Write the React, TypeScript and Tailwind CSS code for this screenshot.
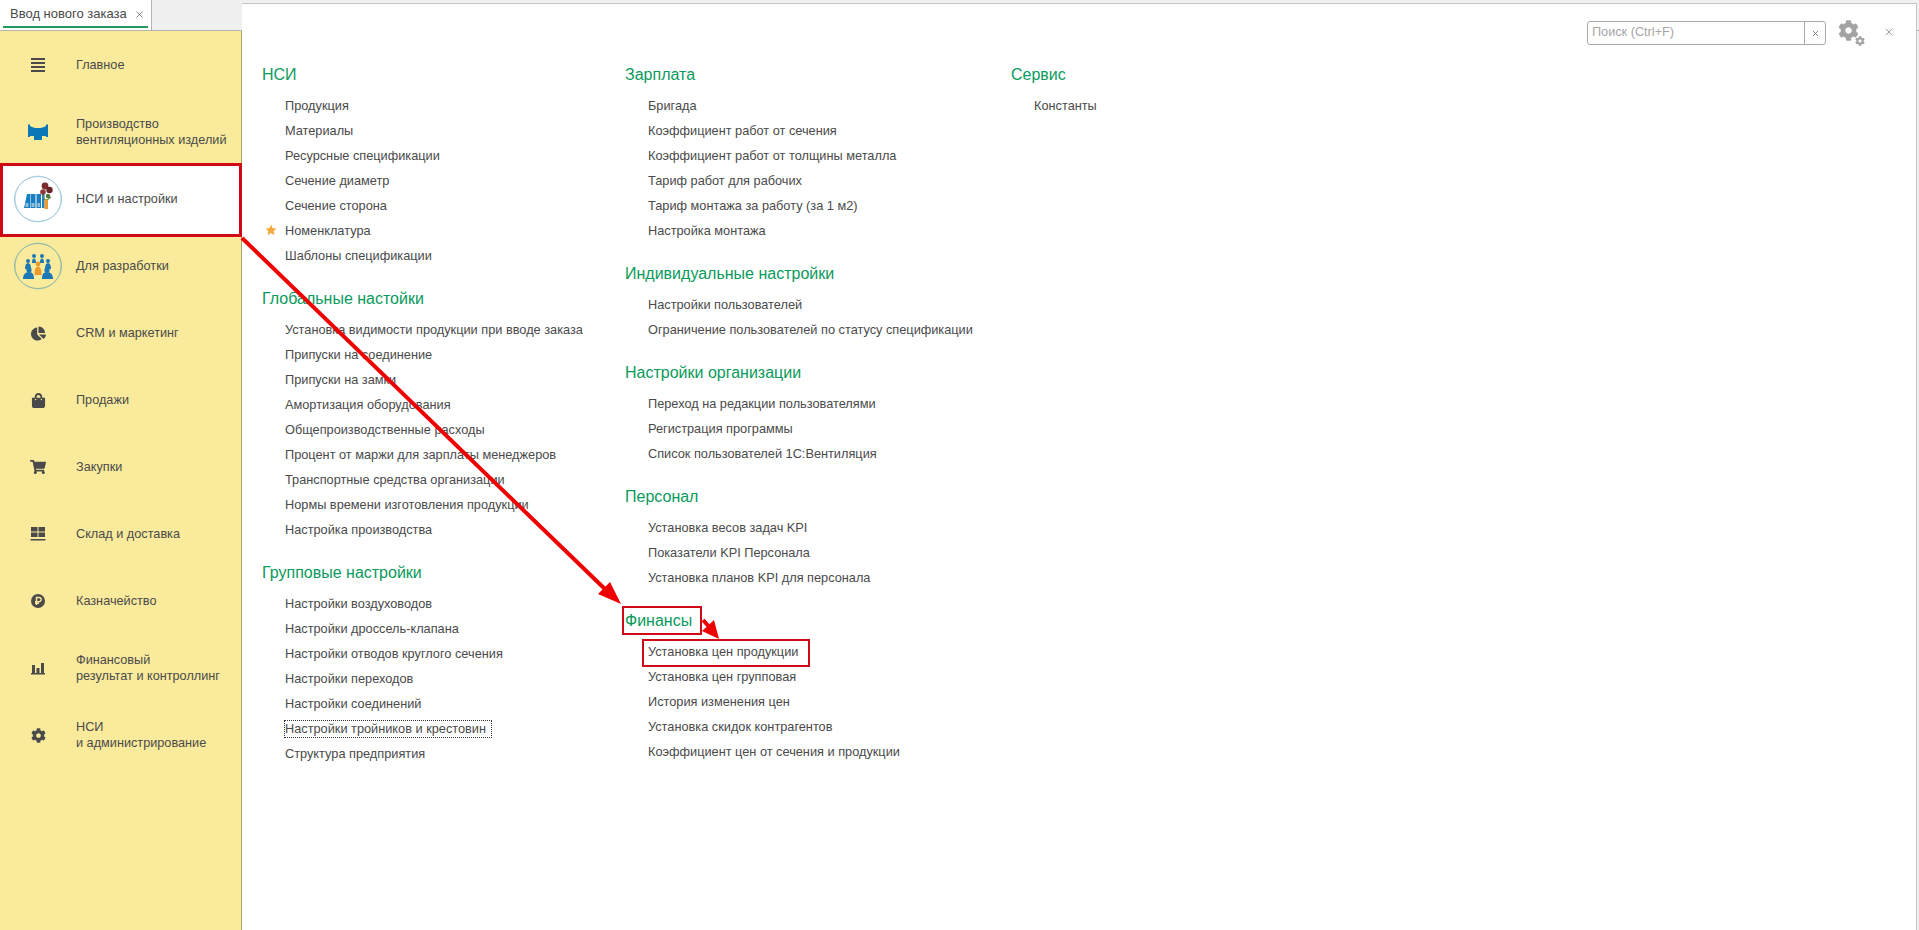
import { FaChartPie, FaCog, FaShoppingBag, FaShoppingCart } from 'react-icons/fa';
import { X } from 'lucide-react';
import type { ReactNode } from 'react';

const font = { fontFamily: '"Liberation Sans", Arial, sans-serif' };

function MenuIcon() {
  return (
    <svg width="16" height="16" viewBox="0 0 16 16" fill="#4a4a4a">
      <rect x="1" y="1" width="14" height="2" />
      <rect x="1" y="5" width="14" height="2" />
      <rect x="1" y="9" width="14" height="2" />
      <rect x="1" y="13" width="14" height="2" />
    </svg>
  );
}

function DuctIcon() {
  return (
    <svg width="20" height="16" viewBox="0 0 20 16" fill="#0b77b5">
      <path d="M0 0.500h2v1.500c3 1.500 4 2 8 2s5-.5 8-2V0.500h2v12.500h-2v-1H14V16H6v-4H2v1H0z" />
    </svg>
  );
}

function NsiBadge() {
  return (
    <svg width="48" height="48" viewBox="0 0 48 48" fill="none">
      <ellipse cx="24" cy="24" rx="23.500" ry="22.500" stroke="#7db4d2" strokeWidth="0.8" />
      <ellipse cx="24" cy="24" rx="22.800" ry="23" stroke="#a9cfe2" strokeWidth="0.6" />
      <path d="M10 33l3-14h3v14z" fill="#1a7fc1" />
      <rect x="16.500" y="19" width="5" height="14" fill="#1a7fc1" />
      <rect x="22.500" y="19" width="4.500" height="14" fill="#1a7fc1" />
      <rect x="28" y="19" width="2.500" height="14" fill="#1a7fc1" />
      <path d="M17.500 29h3M23.500 29h2.500M11.500 29h3M17.500 31h3M23.500 31h2.500M11.500 31h3" stroke="#ffffff" strokeWidth="1" />
      <rect x="30.500" y="24" width="3.500" height="10" fill="#ef9a2f" />
      <path d="M31 25l-3-5M33 25l4-3" stroke="#5f8f4b" strokeWidth="1.200" />
      <circle cx="31" cy="11" r="3.400" fill="#7c2b2f" />
      <circle cx="35.500" cy="15" r="3.200" fill="#6b2528" />
      <circle cx="29" cy="17" r="2.800" fill="#8e3a3a" />
      <circle cx="34" cy="21" r="2.200" fill="#56733f" />
    </svg>
  );
}

function TeamBadge() {
  return (
    <svg width="48" height="48" viewBox="0 0 48 48" fill="none">
      <ellipse cx="24" cy="24" rx="23.500" ry="22.500" stroke="#6fa6a6" strokeWidth="0.8" />
      <ellipse cx="24" cy="24" rx="22.800" ry="23" stroke="#96bcae" strokeWidth="0.6" />
      <g fill="#1b78b6">
        <circle cx="14" cy="19" r="2" />
        <circle cx="34" cy="19" r="2" />
        <circle cx="20" cy="14" r="2" />
        <circle cx="28" cy="14" r="2" />
        <path d="M11 27c0-4 1-6 3-6s3 2 3 6zM31 27c0-4 1-6 3-6s3 2 3 6zM18 21c0-3 .5-4.500 2-4.500s2 1.500 2 4.500zM26 21c0-3 .5-4.500 2-4.500s2 1.500 2 4.500z" />
        <circle cx="15" cy="28" r="2.600" />
        <circle cx="33" cy="28" r="2.600" />
        <path d="M9 37c0-4 2-7 6-7s5 3 5 7zM28 37c0-4 1-7 5-7s6 3 6 7z" />
      </g>
      <circle cx="24" cy="22" r="2.400" fill="#ef9a2f" />
      <path d="M20.500 33c0-5 1-8.500 3.500-8.500s3.500 3.500 3.500 8.500z" fill="#ef9a2f" />
    </svg>
  );
}

function RubleIcon() {
  return (
    <svg width="16" height="16" viewBox="0 0 16 16">
      <circle cx="8" cy="8" r="7" fill="#4a4a4a" />
      <path d="M6.500 12V4.500h2.600a2 2 0 0 1 0 4.200H5M5 10.400h4" fill="none" stroke="#faeb9c" strokeWidth="1.400" />
    </svg>
  );
}

function WarehouseIcon() {
  return (
    <svg width="16" height="16" viewBox="0 0 16 16" fill="#4a4a4a">
      <rect x="1" y="1" width="6.500" height="4.500" />
      <rect x="8.500" y="1" width="6.500" height="4.500" />
      <rect x="1" y="6.500" width="6.500" height="4.500" />
      <rect x="8.500" y="6.500" width="6.500" height="4.500" />
      <rect x="0.500" y="13" width="15" height="1.500" />
    </svg>
  );
}

function BarsIcon() {
  return (
    <svg width="16" height="16" viewBox="0 0 16 16" fill="#4a4a4a">
      <rect x="2" y="5" width="3" height="8" />
      <rect x="6.500" y="8" width="3" height="5" />
      <rect x="11" y="3" width="3" height="10" />
      <rect x="1" y="13" width="14" height="1.500" />
    </svg>
  );
}

function GearsIcon() {
  return (
    <div className="relative w-[27px] h-[26px]">
      <FaCog size={21} color="#a3a3a3" />
      <FaCog size={10} color="#a3a3a3" className="absolute right-0 bottom-0" />
    </div>
  );
}

const sidebarItems: { icon: ReactNode; label: ReactNode; active?: boolean }[] = [
  { icon: <MenuIcon />, label: 'Главное' },
  { icon: <DuctIcon />, label: <>Производство<br />вентиляционных изделий</> },
  { icon: <NsiBadge />, label: 'НСИ и настройки', active: true },
  { icon: <TeamBadge />, label: 'Для разработки' },
  { icon: <FaChartPie size={15} color="#4a4a4a" />, label: 'CRM и маркетинг' },
  { icon: <FaShoppingBag size={15} color="#4a4a4a" />, label: 'Продажи' },
  { icon: <FaShoppingCart size={16} color="#4a4a4a" />, label: 'Закупки' },
  { icon: <WarehouseIcon />, label: 'Склад и доставка' },
  { icon: <RubleIcon />, label: 'Казначейство' },
  { icon: <BarsIcon />, label: <>Финансовый<br />результат и контроллинг</> },
  { icon: <FaCog size={15} color="#4a4a4a" />, label: <>НСИ<br />и администрирование</> },
];

type Group = { title: string; items: string[] };

const columns: { width: string; groups: Group[] }[] = [
  {
    width: 'w-[363px]',
    groups: [
      {
        title: 'НСИ',
        items: ['Продукция', 'Материалы', 'Ресурсные спецификации', 'Сечение диаметр', 'Сечение сторона', 'Номенклатура', 'Шаблоны спецификации'],
      },
      {
        title: 'Глобальные настойки',
        items: [
          'Установка видимости продукции при вводе заказа',
          'Припуски на соединение',
          'Припуски на замки',
          'Амортизация оборудования',
          'Общепроизводственные расходы',
          'Процент от маржи для зарплаты менеджеров',
          'Транспортные средства организации',
          'Нормы времени изготовления продукции',
          'Настройка производства',
        ],
      },
      {
        title: 'Групповые настройки',
        items: [
          'Настройки воздуховодов',
          'Настройки дроссель-клапана',
          'Настройки отводов круглого сечения',
          'Настройки переходов',
          'Настройки соединений',
          'Настройки тройников и крестовин',
          'Структура предприятия',
        ],
      },
    ],
  },
  {
    width: 'w-[386px]',
    groups: [
      {
        title: 'Зарплата',
        items: ['Бригада', 'Коэффициент работ от сечения', 'Коэффициент работ от толщины металла', 'Тариф работ для рабочих', 'Тариф монтажа за работу (за 1 м2)', 'Настройка монтажа'],
      },
      {
        title: 'Индивидуальные настройки',
        items: ['Настройки пользователей', 'Ограничение пользователей по статусу спецификации'],
      },
      {
        title: 'Настройки организации',
        items: ['Переход на редакции пользователями', 'Регистрация программы', 'Список пользователей 1С:Вентиляция'],
      },
      {
        title: 'Персонал',
        items: ['Установка весов задач KPI', 'Показатели KPI Персонала', 'Установка планов KPI для персонала'],
      },
      {
        title: 'Финансы',
        items: ['Установка цен продукции', 'Установка цен групповая', 'История изменения цен', 'Установка скидок контрагентов', 'Коэффициент цен от сечения и продукции'],
      },
    ],
  },
  {
    width: 'w-[300px]',
    groups: [{ title: 'Сервис', items: ['Константы'] }],
  },
];

function LinkItem({ text }: { text: string }) {
  const focused = text === 'Настройки тройников и крестовин';
  return (
    <div className="relative h-[25px] flex items-center pl-[23px] text-[12.75px] text-[#4a4a4a] whitespace-nowrap">
      {text === 'Номенклатура' && (
        <svg className="absolute left-[3px] top-[6px]" width="12" height="12" viewBox="0 0 12 12" fill="#f2a93b">
          <polygon points="6,0.500 7.600,4.200 11.600,4.500 8.600,7.200 9.500,11.200 6,9.100 2.500,11.200 3.400,7.200 0.400,4.500 4.400,4.200" />
        </svg>
      )}
      {focused ? (
        <span className="-ml-px pr-[5px] border border-dotted border-[#333333] leading-[16px]">{text}</span>
      ) : (
        text
      )}
      {text === 'Установка цен продукции' && (
        <div className="absolute left-[17px] top-0 w-[168px] h-[28px] border-2 border-[#cf0a16]" />
      )}
    </div>
  );
}

function GroupBlock({ group }: { group: Group }) {
  return (
    <div className="mb-[18px]">
      <div className="relative h-[25px] mb-[6px] flex items-center text-[16px] text-[#0a9a5c] whitespace-nowrap">
        {group.title}
        {group.title === 'Финансы' && (
          <div className="absolute -left-[3px] -top-[2px] w-[80px] h-[29px] border-2 border-[#cf0a16]" />
        )}
      </div>
      {group.items.map((item) => (
        <LinkItem key={item} text={item} />
      ))}
    </div>
  );
}

export default function App() {
  return (
    <div className="relative w-[1919px] h-[930px] overflow-hidden flex flex-col bg-[#f0f0f0] text-[#4a4a4a]" style={font}>
      {/* Tab strip */}
      <div className="h-[31px] shrink-0 flex border-b border-[#b4b4b4]">
        <div className="relative w-[152px] h-[30px] bg-white border-r border-[#b4b4b4] flex items-center pl-[10px] pb-[2px] text-[13px]">
          Ввод нового заказа
          <X size={11} strokeWidth={1.5} color="#555555" className="ml-[7px]" />
          <div className="absolute left-[3px] right-[3px] bottom-[2px] h-[2px] bg-[#1f9b62]" />
        </div>
      </div>

      <div className="flex-1 flex min-h-0">
        {/* Sections sidebar */}
        <div className="w-[241px] shrink-0 bg-[#faeb9c] border-r border-[#a8a268] box-content">
          {sidebarItems.map((item, i) => (
            <div key={i} className="relative h-[67px] flex items-center pt-[1px] text-[12.7px] leading-[16px]">
              {item.active && (
                <div className="absolute z-20 left-0 -right-px -top-[2px] -bottom-[5px] bg-white border-[3px] border-[#cf0a16]" />
              )}
              <div className="relative z-20 w-[76px] shrink-0 flex justify-center">{item.icon}</div>
              <div className="relative z-20">{item.label}</div>
            </div>
          ))}
        </div>

        {/* Function panel */}
        <div className="relative z-10 w-[1675px] -mt-[28px] bg-white border-t border-r border-[#c4c4c4] flex flex-col">
          <div className="h-[44px] shrink-0 flex items-start justify-end pt-[17px] pr-[21px]">
            <div className="w-[239px] h-[24px] flex border border-[#a8a8a8] rounded-[3px] text-[12.7px]">
              <div className="flex-1 flex items-center pl-[4px] text-[#a6a6a6]">Поиск (Ctrl+F)</div>
              <div className="w-[21px] flex items-center justify-center border-l border-[#a8a8a8]">
                <X size={9} strokeWidth={1.8} color="#555555" />
              </div>
            </div>
            <div className="ml-[12px] -mt-[1px]">
              <GearsIcon />
            </div>
            <div className="ml-[18px] mt-[5px]">
              <X size={12} strokeWidth={1.3} color="#666666" />
            </div>
          </div>
          <div className="flex pl-[20px] pt-[14px]">
            {columns.map((col) => (
              <div key={col.width} className={col.width}>
                {col.groups.map((g) => (
                  <GroupBlock key={g.title} group={g} />
                ))}
              </div>
            ))}
          </div>
        </div>
      </div>

      {/* Tutorial arrows */}
      <svg className="absolute inset-0 z-30 pointer-events-none" width="1919" height="930" fill="none">
        <path d="M242 238L607 591" stroke="#ee0000" strokeWidth="4" />
        <polygon points="621,604 598,594 610,582" fill="#ee0000" />
        <path d="M703 620L712 630" stroke="#ee0000" strokeWidth="4" />
        <polygon points="719,639 702,631 714,620" fill="#ee0000" />
      </svg>
    </div>
  );
}
